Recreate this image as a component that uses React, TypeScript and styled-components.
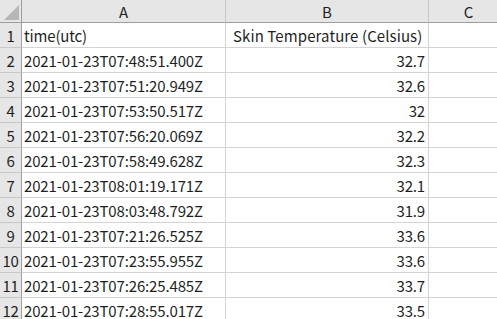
import React from "react";
import styled, { createGlobalStyle } from "styled-components";

const rows: [string, string][] = [
	["time(utc)", "Skin Temperature (Celsius)"],
	["2021-01-23T07:48:51.400Z", "32.7"],
	["2021-01-23T07:51:20.949Z", "32.6"],
	["2021-01-23T07:53:50.517Z", "32"],
	["2021-01-23T07:56:20.069Z", "32.2"],
	["2021-01-23T07:58:49.628Z", "32.3"],
	["2021-01-23T08:01:19.171Z", "32.1"],
	["2021-01-23T08:03:48.792Z", "31.9"],
	["2021-01-23T07:21:26.525Z", "33.6"],
	["2021-01-23T07:23:55.955Z", "33.6"],
	["2021-01-23T07:26:25.485Z", "33.7"],
	["2021-01-23T07:28:55.017Z", "33.5"],
];

const GlobalStyle = createGlobalStyle`
	html, body {
		margin: 0;
		padding: 0;
		background: #ffffff;
		overflow: hidden;
	}
	body {
		font-family: "Noto Sans CJK JP", "Noto Sans", sans-serif;
		color: #1f1f1f;
	}
`;

const Sheet = styled.div`
	display: grid;
	grid-template-columns: 22px 204px 203px 80px;
	grid-template-rows: 23px repeat(12, 25px);
	width: 509px;
`;

const HeadCell = styled.div`
	background: #e6e6e6;
	box-sizing: border-box;
	border-right: 1px solid #c8c8c8;
	border-bottom: 1px solid #9e9e9e;
	display: flex;
	align-items: center;
	justify-content: center;
	font-size: 15px;
	line-height: 1;
	padding-top: 1px;
`;

const Corner = styled.div`
	background: #e6e6e6;
	box-sizing: border-box;
	border-right: 1px solid #9e9e9e;
	border-bottom: 1px solid #9e9e9e;
	display: flex;
	align-items: flex-end;
	justify-content: flex-end;
	padding: 0 2px 2px 0;
`;

const RowNum = styled.div`
	background: #e6e6e6;
	box-sizing: border-box;
	border-right: 1px solid #9e9e9e;
	border-bottom: 1px solid #c8c8c8;
	display: flex;
	align-items: flex-end;
	justify-content: center;
	font-size: 15px;
	line-height: 1;
	letter-spacing: -0.4px;
	padding-bottom: 4px;
`;

const Cell = styled.div<{ $num?: boolean; $indent?: boolean }>`
	box-sizing: border-box;
	border-right: 1px solid #d4d4d4;
	border-bottom: 1px solid #d4d4d4;
	display: flex;
	align-items: flex-end;
	justify-content: ${(p) => (p.$num ? "flex-end" : "flex-start")};
	padding: 0 ${(p) => (p.$num ? "3px" : "0")} 4px ${(p) => (p.$num ? "0" : p.$indent ? "7px" : "2px")};
	font-size: 15px;
	line-height: 1;
	letter-spacing: ${(p) => (p.$indent ? "0.1px" : "-0.15px")};
	white-space: nowrap;
	overflow: visible;
`;

const App: React.FC = () => {
	return (
		<>
			<GlobalStyle />
			<Sheet>
				<Corner>
					<svg width="15" height="15" viewBox="0 0 15 15">
						<polygon points="15,0 15,15 0,15" fill="#b7b7b7" />
					</svg>
				</Corner>
				<HeadCell>A</HeadCell>
				<HeadCell>B</HeadCell>
				<HeadCell>C</HeadCell>
				{rows.map(([a, b], i) => (
					<React.Fragment key={i}>
						<RowNum>{i + 1}</RowNum>
						<Cell>{a}</Cell>
						<Cell $num={i > 0} $indent={i === 0}>
							{b}
						</Cell>
						<Cell />
					</React.Fragment>
				))}
			</Sheet>
		</>
	);
};

export default App;
